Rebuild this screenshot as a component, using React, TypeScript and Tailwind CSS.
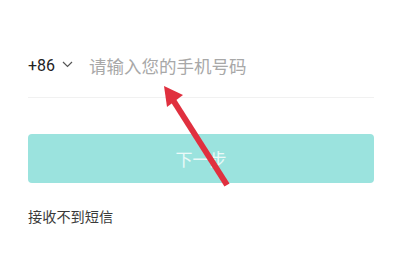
import React from "react";

export default function App() {
  return (
    <div className="relative w-[400px] h-[260px] bg-white overflow-hidden" style={{ fontFamily: '"Noto Sans CJK SC", "Noto Sans", sans-serif' }}>
      <div className="pl-[28px] pr-[26px]">
        <div className="mt-[37px] h-[61px] flex items-center border-b border-[#f1f1f1]">
          <div className="flex items-center mt-[-3px]">
            <span className="text-[16px] text-[#222] leading-none" style={{ fontFamily: '"Roboto", "Noto Sans", sans-serif' }}>+86</span>
            <svg className="ml-[7px] mt-[-3px]" width="11" height="7" viewBox="0 0 11 7">
              <path d="M1 1 L5.5 5.5 L10 1" fill="none" stroke="#555" strokeWidth="1.2" />
            </svg>
            <span className="ml-[16px] text-[17.5px] text-[#a8a8a8] leading-none">请输入您的手机号码</span>
          </div>
        </div>
        <div className="mt-[36px] h-[49px] rounded-[4px] bg-[#9be3de] flex items-center justify-center">
          <span className="text-[17px] text-white/80 leading-none">下一步</span>
        </div>
        <div className="mt-[23px] text-[14.2px] leading-[20px] text-[#3a3a3a]">接收不到短信</div>
      </div>
      <svg className="absolute left-0 top-0 pointer-events-none" width="400" height="260" viewBox="0 0 400 260">
        <line x1="173" y1="100" x2="227" y2="185" stroke="#e0303f" strokeWidth="6" strokeLinecap="butt" />
        <polygon points="164,86 183,95 167,107" fill="#e0303f" />
      </svg>
    </div>
  );
}
